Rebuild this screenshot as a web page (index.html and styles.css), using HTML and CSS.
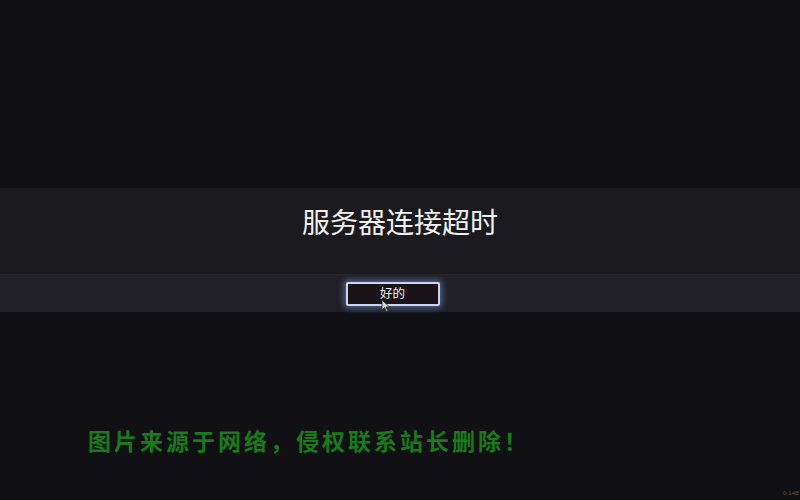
FILE: index.html
```html
<!DOCTYPE html>
<html lang="zh-CN">
  <head>
    <meta charset="UTF-8" />
    <title>服务器连接超时</title>
    <link rel="stylesheet" href="styles.css">
  </head>
  <body>
    <main class="screen">
      <section class="dialog">
        <div class="dialog-title">服务器连接超时</div>
        <div class="dialog-actions">
          <button class="ok-btn">好的</button>
          <svg class="cursor" width="10" height="14" viewBox="0 0 10 14">
            <path d="M1 1 L1 11 L3.5 8.5 L5.5 13 L7 12.3 L5 8 L8.5 8 Z" fill="#d8d8d8" stroke="#222" stroke-width="0.8" />
          </svg>
        </div>
      </section>

      <p class="notice">图片来源于网络，侵权联系站长删除！</p>
    </main>
    <span class="version">0.14B</span>
  </body>
</html>
```

FILE: styles.css
```css
body {
  margin: 0;
  background-color: #111015;
  font-family: "Noto Sans CJK SC", "Noto Sans", sans-serif;
  width: 800px;
  height: 500px;
  overflow: hidden;
  position: relative;
}

.screen {
  padding-top: 188px;
}

.dialog-title {
  height: 73px;
  padding-top: 13px;
  text-align: center;
  background-color: #1b1a1f;
  color: #f2f2f2;
  font-size: 28px;
  line-height: 40px;
  border-bottom: 1px solid #26252b;
}

.dialog-actions {
  height: 37px;
  display: flex;
  align-items: center;
  justify-content: center;
  background-color: #212026;
  position: relative;
}

.ok-btn {
  width: 94px;
  height: 24px;
  margin-right: 15px;
  background-color: #1a1418;
  border: 2px solid #c9d6ee;
  border-radius: 2px;
  color: #ececec;
  font-family: "Noto Sans CJK SC", sans-serif;
  font-size: 12.5px;
  padding: 0 0 1px;
  line-height: 18px;
  box-shadow: 0 0 6px 2px rgba(120, 160, 230, 0.55);
}

.cursor {
  position: absolute;
  left: 381px;
  top: 24px;
}

.notice {
  margin: 111px 0 0 88px;
  color: #1b7a1b;
  font-size: 23px;
  font-weight: bold;
  letter-spacing: 3px;
}

.version {
  position: absolute;
  right: 1px;
  bottom: 4px;
  color: #55545a;
  font-family: "Liberation Sans", sans-serif;
  font-size: 6px;
}
```
